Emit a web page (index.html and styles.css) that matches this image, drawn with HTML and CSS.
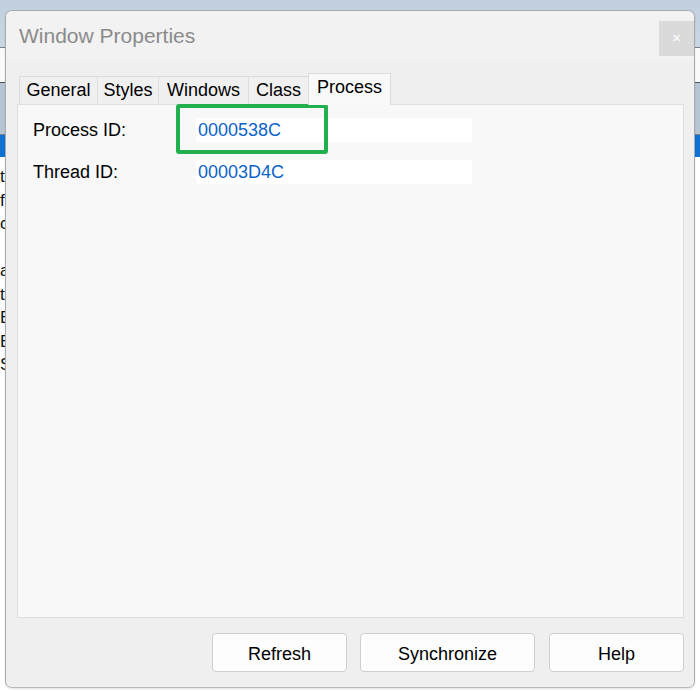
FILE: index.html
```html
<!DOCTYPE html>
<html lang="en">
<head>
<meta charset="utf-8">
<title>Window Properties</title>
<link rel="stylesheet" href="styles.css">
</head>
<body>
<div class="desktop">
  <div class="band band-top"></div>
  <div class="rule"></div>
  <div class="band band-white"></div>
  <div class="rule rule-dark"></div>
  <div class="band band-grey"></div>
  <div class="rule"></div>
  <div class="band band-blue"></div>
  <div class="band band-doc">
    <div class="doc-lines">
      <span class="frag">t</span>
      <span class="frag">f</span>
      <span class="frag">c</span>
      <span class="frag">&nbsp;</span>
      <span class="frag">a</span>
      <span class="frag">t</span>
      <span class="frag">E</span>
      <span class="frag">E</span>
      <span class="frag">S</span>
    </div>
  </div>
</div>

<div class="dialog">
  <div class="titlebar">
    <div class="title">Window Properties</div>
    <div class="close">&#x2715;</div>
  </div>
  <div class="dialog-body">
    <div class="tabs">
      <div class="tab tab-general">General</div>
      <div class="tab tab-styles">Styles</div>
      <div class="tab tab-windows">Windows</div>
      <div class="tab tab-class">Class</div>
      <div class="tab tab-process active">Process</div>
    </div>
    <div class="panel">
      <div class="row">
        <div class="label">Process ID:</div>
        <div class="field">0000538C</div>
      </div>
      <div class="row">
        <div class="label">Thread ID:</div>
        <div class="field">00003D4C</div>
      </div>
      <div class="highlight"></div>
    </div>
    <div class="buttons">
      <div class="btn btn-refresh">Refresh</div>
      <div class="btn btn-sync">Synchronize</div>
      <div class="btn btn-help">Help</div>
    </div>
  </div>
</div>
</body>
</html>
```

FILE: styles.css
```css
html, body {
  margin: 0;
  padding: 0;
}

body {
  width: 700px;
  height: 692px;
  overflow: hidden;
  position: relative;
  background: #ffffff;
  font-family: "Liberation Sans", Arial, sans-serif;
}

/* ---------- desktop behind the dialog ---------- */
.desktop {
  display: flex;
  flex-direction: column;
  height: 692px;
}

.band-top {
  height: 47px;
  background: linear-gradient(#c2d0de, #cad6e3);
}

.rule {
  height: 1px;
  background: #7a7f85;
}

.rule-dark {
  background: #4f5358;
}

.band-white {
  height: 34px;
  background: #fafafa;
}

.band-grey {
  height: 51px;
  background: #b6c4d3;
}

.band-blue {
  height: 22px;
  background: #1170d3;
  border-bottom: 2px solid #ffffff;
}

.band-doc {
  flex: 1;
  background: #ffffff;
  padding-top: 6px;
}

.doc-lines {
  width: 9px;
  display: flex;
  flex-direction: column;
  align-items: flex-start;
  font-size: 17px;
  line-height: 23.5px;
  color: #111;
}

.frag {
  white-space: nowrap;
  padding-left: 0;
}

/* ---------- dialog window ---------- */
.dialog {
  position: absolute;
  left: 5px;
  top: 10px;
  width: 690px;
  height: 678px;
  box-sizing: border-box;
  border: 1px solid #a6abb1;
  border-bottom-color: #b9b9b9;
  border-radius: 7px;
  background: #efefef;
  box-shadow: 0 1px 2px rgba(0, 0, 0, 0.12);
  display: flex;
  flex-direction: column;
  overflow: hidden;
  z-index: 5;
}

.titlebar {
  height: 50px;
  background: #f2f2f2;
  display: flex;
  align-items: center;
  justify-content: space-between;
  flex-shrink: 0;
}

.title {
  padding-left: 13px;
  font-size: 21px;
  line-height: 24px;
  color: #8b8b8b;
  margin-top: 0;
}

.close {
  align-self: flex-start;
  margin-top: 10px;
  width: 35px;
  height: 35px;
  background: #dadada;
  color: #f6f6f6;
  font-size: 11px;
  font-weight: bold;
  display: flex;
  align-items: center;
  justify-content: center;
}

.dialog-body {
  flex: 1;
  display: flex;
  flex-direction: column;
  padding: 12px 10px 15px 11px;
  background: #efefef;
}

/* ---------- tabs ---------- */
.tabs {
  display: flex;
  align-items: flex-end;
  margin-left: 2px;
  position: relative;
  z-index: 2;
}

.tab {
  box-sizing: border-box;
  height: 28px;
  border: 1px solid #dcdcdc;
  border-bottom: none;
  border-right: none;
  background: #f0f0f0;
  font-size: 18px;
  line-height: 27px;
  color: #000;
  text-align: center;
}

.tab-general { width: 78px; }
.tab-styles { width: 61px; }
.tab-windows { width: 90px; }
.tab-class { width: 60px; }

.tab.active {
  width: 83px;
  height: 32px;
  margin-bottom: -1px;
  border-right: 1px solid #dcdcdc;
  background: #f9f9f9;
  line-height: 26px;
  padding-bottom: 5px;
}

/* ---------- panel ---------- */
.panel {
  flex: 1;
  position: relative;
  border: 1px solid #dfdfdf;
  background: #f8f8f8;
  padding: 13px 15px 0 15px;
  display: flex;
  flex-direction: column;
  gap: 18px;
}

.row {
  display: flex;
  align-items: center;
  height: 24px;
}

.label {
  width: 163px;
  font-size: 18px;
  line-height: 24px;
  color: #000;
}

.field {
  width: 276px;
  height: 24px;
  box-sizing: border-box;
  padding-left: 2px;
  background: #ffffff;
  font-size: 18px;
  line-height: 24px;
  color: #0c63c9;
}

.highlight {
  position: absolute;
  left: 158px;
  top: -1px;
  width: 152px;
  height: 50px;
  box-sizing: border-box;
  border: 4px solid #22af4d;
  border-radius: 3px;
}

/* ---------- buttons ---------- */
.buttons {
  display: flex;
  justify-content: flex-end;
  gap: 13px;
  margin-top: 15px;
}

.btn {
  box-sizing: border-box;
  height: 39px;
  border: 1px solid #cfcfcf;
  border-radius: 4px;
  background: #fdfdfd;
  font-size: 18px;
  line-height: 40px;
  text-align: center;
  color: #000;
}

.btn-refresh { width: 135px; }
.btn-sync { width: 175px; margin-right: 1px; }
.btn-help { width: 135px; }
```
